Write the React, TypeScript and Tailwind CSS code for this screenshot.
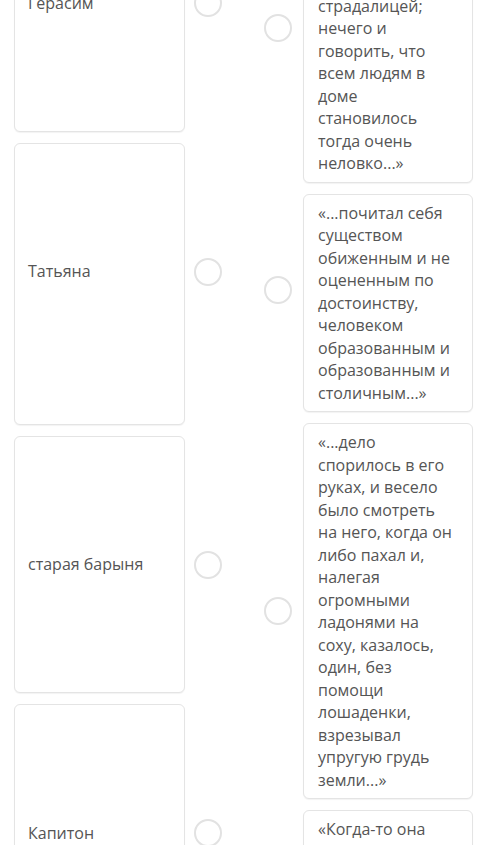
import React from "react";

const Circle = () => (
  <div className="h-[28px] w-[28px] rounded-full border-2 border-[#e2e2e2] bg-white" />
);

const cardCls =
  "rounded-[6px] border border-[#e4e4e4] bg-white shadow-[0_1px_1px_rgba(0,0,0,0.05)]";

const left = [
  { name: "Герасим", h: "h-[258px]", pb: "", cm: "" },
  { name: "Татьяна", h: "h-[282px]", pb: "pb-[25px]", cm: "mb-[25px]" },
  { name: "старая барыня", h: "h-[257px]", pb: "", cm: "" },
  { name: "Капитон", h: "h-[258px]", pb: "", cm: "" },
];

const right: { lines: string[]; cm: string }[] = [
  {
    lines: [
      "«...в иные дни",
      "она бывала",
      "не в духе и",
      "представлялась",
      "совершенной",
      "страдалицей;",
      "нечего и",
      "говорить, что",
      "всем людям в",
      "доме",
      "становилось",
      "тогда очень",
      "неловко...»",
    ],
    cm: "",
  },
  {
    lines: [
      "«...почитал себя",
      "существом",
      "обиженным и не",
      "оцененным по",
      "достоинству,",
      "человеком",
      "образованным и",
      "образованным и",
      "столичным...»",
    ],
    cm: "mb-[25px]",
  },
  {
    lines: [
      "«...дело",
      "спорилось в его",
      "руках, и весело",
      "было смотреть",
      "на него, когда он",
      "либо пахал и,",
      "налегая",
      "огромными",
      "ладонями на",
      "соху, казалось,",
      "один, без",
      "помощи",
      "лошаденки,",
      "взрезывал",
      "упругую грудь",
      "земли...»",
    ],
    cm: "",
  },
  {
    lines: [
      "«Когда-то она",
      "была",
      "красавицей, но",
      "красота с нее",
      "очень скоро",
      "соскочила...»",
    ],
    cm: "",
  },
];

export default function App() {
  return (
    <div className="h-[845px] overflow-hidden bg-white font-['Open_Sans',sans-serif] text-[16px] leading-[22.5px] text-[#555555]">
      <div className="-mt-[126px] flex gap-[42px] pl-[14px]">
        <div className="flex w-[208px] flex-col gap-[11px]">
          {left.map((it) => (
            <div key={it.name} className="flex gap-[9px]">
              <div
                className={`${cardCls} ${it.h} ${it.pb} flex w-[171px] shrink-0 items-center px-[13px]`}
              >
                {it.name}
              </div>
              <div className={`self-center ${it.cm}`}>
                <Circle />
              </div>
            </div>
          ))}
        </div>
        <div className="flex w-[209px] flex-col gap-[11px]">
          {right.map((it, i) => (
            <div key={i} className="flex gap-[11px]">
              <div className={`self-center ${it.cm}`}>
                <Circle />
              </div>
              <div
                className={`${cardCls} w-[170px] shrink-0 whitespace-nowrap px-[14px] py-[7px]`}
              >
                {it.lines.map((l, j) => (
                  <div key={j}>{l}</div>
                ))}
              </div>
            </div>
          ))}
        </div>
      </div>
    </div>
  );
}
